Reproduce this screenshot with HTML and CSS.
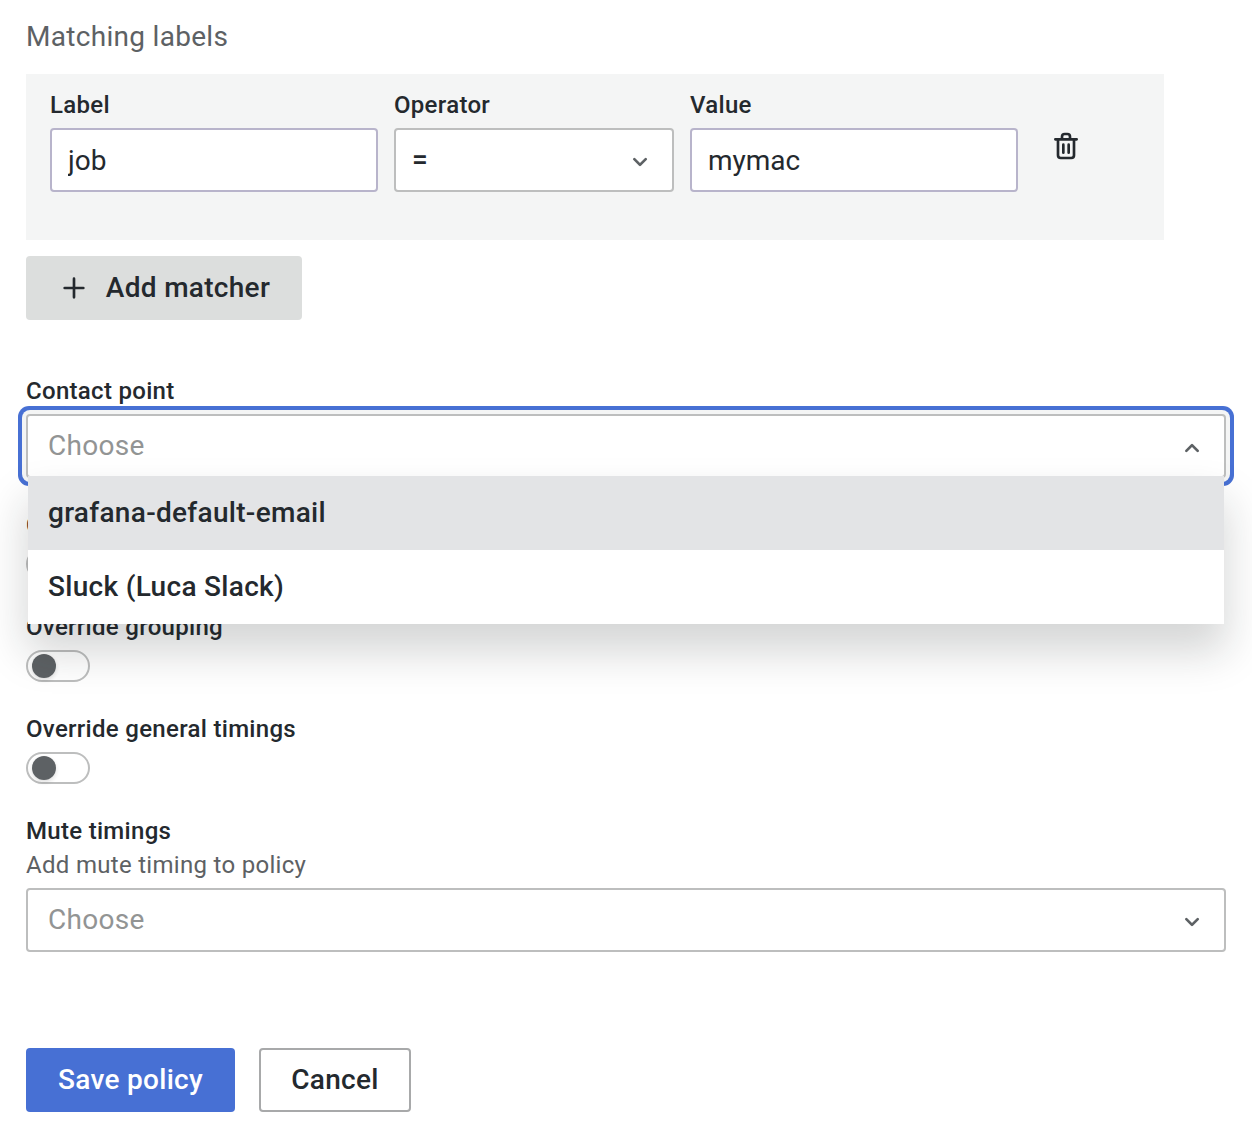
FILE: index.html
```html
<!DOCTYPE html>
<html lang="en">
<head>
<meta charset="utf-8">
<title>Notification policy</title>
<link rel="stylesheet" href="styles.css">
</head>
<body>
<svg class="sprite" width="0" height="0" aria-hidden="true">
  <symbol id="angle-down" viewBox="0 0 24 24"><path d="M17,9.17a1,1,0,0,0-1.41,0L12,12.71,8.46,9.17a1,1,0,0,0-1.41,0,1,1,0,0,0,0,1.42l4.24,4.24a1,1,0,0,0,1.42,0L17,10.59A1,1,0,0,0,17,9.17Z"/></symbol>
  <symbol id="angle-up" viewBox="0 0 24 24"><path d="M17,13.41,12.71,9.17a1,1,0,0,0-1.42,0L7.05,13.41a1,1,0,0,0,0,1.42,1,1,0,0,0,1.41,0L12,11.29l3.54,3.54a1,1,0,0,0,.7.29,1,1,0,0,0,.71-.29A1,1,0,0,0,17,13.41Z"/></symbol>
  <symbol id="plus" viewBox="0 0 24 24"><path d="M19,11H13V5a1,1,0,0,0-2,0v6H5a1,1,0,0,0,0,2h6v6a1,1,0,0,0,2,0V13h6a1,1,0,0,0,0-2Z"/></symbol>
  <symbol id="trash" viewBox="0 0 24 24"><path d="M10,18a1,1,0,0,0,1-1V11a1,1,0,0,0-2,0v6A1,1,0,0,0,10,18ZM20,6H16V5a3,3,0,0,0-3-3H11A3,3,0,0,0,8,5V6H4A1,1,0,0,0,4,8H5V19a3,3,0,0,0,3,3h8a3,3,0,0,0,3-3V8h1a1,1,0,0,0,0-2ZM10,5a1,1,0,0,1,1-1h2a1,1,0,0,1,1,1V6H10Zm7,14a1,1,0,0,1-1,1H8a1,1,0,0,1-1-1V8H17Zm-3-1a1,1,0,0,0,1-1V11a1,1,0,0,0-2,0v6A1,1,0,0,0,14,18Z"/></symbol>
</svg>
<form class="policy-form">
  <h2 class="section-title">Matching labels</h2>
  <div class="matchers">
    <div class="field">
      <label class="label" for="matcher-label">Label</label>
      <input class="input" id="matcher-label" value="job">
    </div>
    <div class="field field-operator">
      <div class="label">Operator</div>
      <div class="select select-compact">
        <span class="select-value">=</span>
        <svg class="icon icon-muted"><use href="#angle-down"/></svg>
      </div>
    </div>
    <div class="field">
      <label class="label" for="matcher-value">Value</label>
      <input class="input" id="matcher-value" value="mymac">
    </div>
    <button class="icon-button" type="button" aria-label="Remove matcher"><svg class="icon"><use href="#trash"/></svg></button>
  </div>
  <button class="button button-secondary" type="button"><svg class="icon"><use href="#plus"/></svg>Add matcher</button>

  <div class="field field-contact">
    <div class="label">Contact point</div>
    <div class="select select-open">
      <span class="placeholder">Choose</span>
      <svg class="icon icon-muted"><use href="#angle-up"/></svg>
      <div class="menu">
        <div class="option option-active">grafana-default-email</div>
        <div class="option">Sluck (Luca Slack)</div>
      </div>
    </div>
  </div>
  <div class="field">
    <div class="label">C</div>
    <div class="switch"><span class="knob"></span></div>
  </div>
  <div class="field">
    <div class="label">Override grouping</div>
    <div class="switch"><span class="knob"></span></div>
  </div>
  <div class="field">
    <div class="label">Override general timings</div>
    <div class="switch"><span class="knob"></span></div>
  </div>
  <div class="field">
    <div class="label label-described">Mute timings</div>
    <div class="description">Add mute timing to policy</div>
    <div class="select">
      <span class="placeholder">Choose</span>
      <svg class="icon icon-muted"><use href="#angle-down"/></svg>
    </div>
  </div>
  <div class="actions">
    <button class="button button-primary" type="button">Save policy</button>
    <button class="button button-outline" type="button">Cancel</button>
  </div>
</form>
</body>
</html>
```
FILE: styles.css
```css
* {
  box-sizing: border-box;
}

body {
  margin: 0;
  background: #fff;
  color: #24292e;
  font: 400 28px/44px Roboto, "Liberation Sans", sans-serif;
  letter-spacing: 0.3px;
  overflow: hidden;
}

.sprite {
  position: absolute;
}

.policy-form {
  width: 1200px;
  margin-left: 26px;
  padding-top: 15px;
}

.section-title {
  margin: 0 0 15px;
  font-size: 28px;
  font-weight: 400;
  color: #5d6164;
}

.matchers {
  display: flex;
  gap: 16px;
  width: 1138px;
  height: 166px;
  margin-bottom: 16px;
  padding: 16px 24px;
  background: #f4f5f5;
}

.matchers .field {
  width: 328px;
  margin: 0;
}

.matchers .field-operator {
  width: 280px;
}

.field {
  margin-bottom: 32px;
}

.field-contact {
  margin-top: 56px;
}

.label {
  display: block;
  margin-bottom: 8px;
  font-size: 24px;
  font-weight: 500;
  line-height: 30px;
}

.label-described {
  margin-bottom: 4px;
}

.description {
  margin-bottom: 8px;
  font-size: 24px;
  line-height: 30px;
  color: #5d6164;
}

.input,
.select {
  width: 100%;
  height: 64px;
  border: 2px solid #bdbebe;
  border-radius: 4px;
  background: #fff;
}

.input {
  display: block;
  border-color: #b8b4cb;
  padding: 0 16px;
  color: inherit;
  font: inherit;
  letter-spacing: 0;
}

.select {
  position: relative;
  display: flex;
  align-items: center;
  justify-content: space-between;
  padding: 4px 16px 0 20px;
}

.select-compact {
  padding-left: 16px;
}

.select-value,
.placeholder {
  margin-top: -4px;
}

.select-value {
  font-weight: 500;
}

.placeholder {
  color: #929494;
}

.select-open {
  box-shadow: 0 0 0 4px #f4f5f5, 0 0 0 8px #4770d4;
}

.menu {
  position: absolute;
  z-index: 1;
  top: 60px;
  left: 0;
  right: 0;
  background: #fff;
  box-shadow: 0 26px 40px 2px rgba(24, 30, 28, 0.18);
}

.option {
  height: 74px;
  padding: 0 20px;
  font-weight: 500;
  line-height: 74px;
}

.option-active {
  background: #e3e4e6;
}

.switch {
  display: flex;
  align-items: center;
  width: 64px;
  height: 32px;
  padding-left: 4px;
  border: 2px solid #bdbebe;
  border-radius: 16px;
}

.knob {
  width: 24px;
  height: 24px;
  border-radius: 50%;
  background: #5d6164;
  box-shadow: 0 2px 4px rgba(24, 26, 27, 0.15);
}

.icon {
  flex: none;
  width: 32px;
  height: 32px;
  fill: currentColor;
}

.icon-muted {
  color: #5d6164;
}

.icon-button {
  align-self: flex-start;
  display: flex;
  margin: 40px 0 0 16px;
  padding: 0;
  border: 0;
  background: none;
  color: inherit;
}

.button {
  display: flex;
  align-items: center;
  justify-content: center;
  gap: 16px;
  height: 64px;
  padding: 0;
  border: 0;
  border-radius: 4px;
  color: inherit;
  font: inherit;
  font-weight: 500;
  letter-spacing: inherit;
}

.button-secondary {
  width: 276px;
  background: #dcdedd;
}

.button-primary {
  width: 209px;
  background: #4770d4;
  color: #fff;
}

.button-outline {
  width: 152px;
  border: 2px solid #a8a9aa;
  background: #fff;
}

.actions {
  display: flex;
  gap: 24px;
  margin-top: 96px;
}
```
